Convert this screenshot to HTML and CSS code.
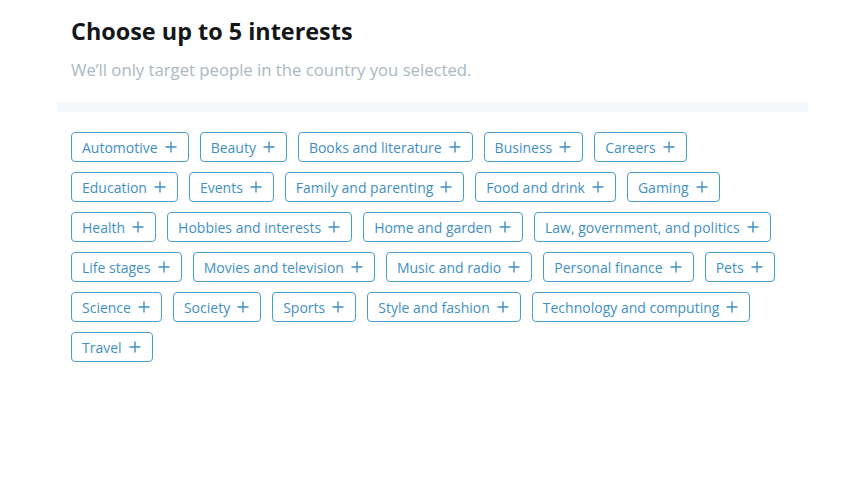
FILE: index.html
```html
<!DOCTYPE html>
<html>
<head>
<meta charset="utf-8">
<link rel="stylesheet" href="styles.css">
</head>
<body>
<div class="page">
  <div class="header">
    <h1 class="title">Choose up to 5 interests</h1>
    <p class="subtitle">We’ll only target people in the country you selected.</p>
  </div>
  <div class="divider"></div>
  <div class="chips">
    <button class="chip">Automotive<svg class="plus" viewBox="0 0 12 12"><path d="M6 0.5V11.5M0.5 6H11.5"/></svg></button>
    <button class="chip">Beauty<svg class="plus" viewBox="0 0 12 12"><path d="M6 0.5V11.5M0.5 6H11.5"/></svg></button>
    <button class="chip">Books and literature<svg class="plus" viewBox="0 0 12 12"><path d="M6 0.5V11.5M0.5 6H11.5"/></svg></button>
    <button class="chip">Business<svg class="plus" viewBox="0 0 12 12"><path d="M6 0.5V11.5M0.5 6H11.5"/></svg></button>
    <button class="chip">Careers<svg class="plus" viewBox="0 0 12 12"><path d="M6 0.5V11.5M0.5 6H11.5"/></svg></button>
    <button class="chip">Education<svg class="plus" viewBox="0 0 12 12"><path d="M6 0.5V11.5M0.5 6H11.5"/></svg></button>
    <button class="chip">Events<svg class="plus" viewBox="0 0 12 12"><path d="M6 0.5V11.5M0.5 6H11.5"/></svg></button>
    <button class="chip">Family and parenting<svg class="plus" viewBox="0 0 12 12"><path d="M6 0.5V11.5M0.5 6H11.5"/></svg></button>
    <button class="chip">Food and drink<svg class="plus" viewBox="0 0 12 12"><path d="M6 0.5V11.5M0.5 6H11.5"/></svg></button>
    <button class="chip">Gaming<svg class="plus" viewBox="0 0 12 12"><path d="M6 0.5V11.5M0.5 6H11.5"/></svg></button>
    <button class="chip">Health<svg class="plus" viewBox="0 0 12 12"><path d="M6 0.5V11.5M0.5 6H11.5"/></svg></button>
    <button class="chip">Hobbies and interests<svg class="plus" viewBox="0 0 12 12"><path d="M6 0.5V11.5M0.5 6H11.5"/></svg></button>
    <button class="chip">Home and garden<svg class="plus" viewBox="0 0 12 12"><path d="M6 0.5V11.5M0.5 6H11.5"/></svg></button>
    <button class="chip">Law, government, and politics<svg class="plus" viewBox="0 0 12 12"><path d="M6 0.5V11.5M0.5 6H11.5"/></svg></button>
    <button class="chip">Life stages<svg class="plus" viewBox="0 0 12 12"><path d="M6 0.5V11.5M0.5 6H11.5"/></svg></button>
    <button class="chip">Movies and television<svg class="plus" viewBox="0 0 12 12"><path d="M6 0.5V11.5M0.5 6H11.5"/></svg></button>
    <button class="chip">Music and radio<svg class="plus" viewBox="0 0 12 12"><path d="M6 0.5V11.5M0.5 6H11.5"/></svg></button>
    <button class="chip">Personal finance<svg class="plus" viewBox="0 0 12 12"><path d="M6 0.5V11.5M0.5 6H11.5"/></svg></button>
    <button class="chip">Pets<svg class="plus" viewBox="0 0 12 12"><path d="M6 0.5V11.5M0.5 6H11.5"/></svg></button>
    <button class="chip">Science<svg class="plus" viewBox="0 0 12 12"><path d="M6 0.5V11.5M0.5 6H11.5"/></svg></button>
    <button class="chip">Society<svg class="plus" viewBox="0 0 12 12"><path d="M6 0.5V11.5M0.5 6H11.5"/></svg></button>
    <button class="chip">Sports<svg class="plus" viewBox="0 0 12 12"><path d="M6 0.5V11.5M0.5 6H11.5"/></svg></button>
    <button class="chip">Style and fashion<svg class="plus" viewBox="0 0 12 12"><path d="M6 0.5V11.5M0.5 6H11.5"/></svg></button>
    <button class="chip">Technology and computing<svg class="plus" viewBox="0 0 12 12"><path d="M6 0.5V11.5M0.5 6H11.5"/></svg></button>
    <button class="chip">Travel<svg class="plus" viewBox="0 0 12 12"><path d="M6 0.5V11.5M0.5 6H11.5"/></svg></button>
  </div>
</div>
</body>
</html>
```

FILE: styles.css
```css
html, body {
  margin: 0;
  padding: 0;
  background: #ffffff;
}
body {
  font-family: "Open Sans", "Noto Sans", "Liberation Sans", sans-serif;
}
.page {
  width: 751px;
  padding: 0 0 0 57px;
}
.header {
  padding: 14px 14px 0 14px;
}
.title {
  margin: 0;
  font-size: 23.4px;
  font-weight: 700;
  line-height: 34px;
  color: #14171a;
}
.subtitle {
  margin: 10px 0 0 0;
  font-size: 16.7px;
  line-height: 24px;
  color: #aab8c2;
}
.divider {
  margin-top: 20px;
  height: 10px;
  background: #f5f8fa;
}
.chips {
  display: flex;
  flex-wrap: wrap;
  gap: 10px 11px;
  padding: 20px 14px;
}
.chip {
  display: inline-flex;
  align-items: center;
  height: 30px;
  box-sizing: border-box;
  padding: 0 11px 0 10px;
  border: 1px solid #4a9fcf;
  border-radius: 4px;
  background: #fff;
  color: #3f90c2;
  font-family: inherit;
  font-size: 14px;
  cursor: pointer;
}
.plus {
  width: 12px;
  height: 12px;
  margin-left: 7px;
  fill: none;
  stroke: #3f90c2;
  stroke-width: 1.4;
}
```
